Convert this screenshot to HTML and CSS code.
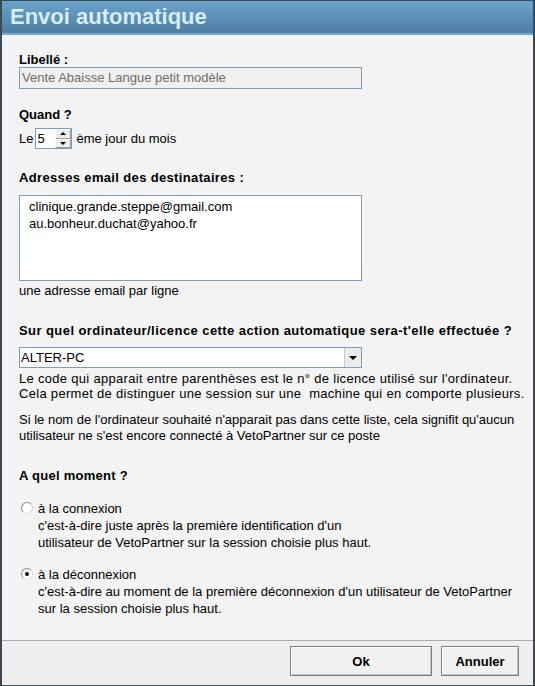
FILE: index.html
```html
<!DOCTYPE html>
<html lang="fr">
<head>
<meta charset="utf-8">
<title>Envoi automatique</title>
<link rel="stylesheet" href="styles.css">
</head>
<body>
<div class="window">
  <div class="titlebar"><h1 class="title">Envoi automatique</h1></div>
  <div class="content">
    <div class="label lbl-libelle">Libellé :</div>
    <div class="textbox disabled">Vente Abaisse Langue petit modèle</div>

    <div class="label lbl-quand">Quand ?</div>
    <div class="spin-row">
      <span>Le</span>
      <span class="spinbox">
        <span class="spin-value">5</span>
        <span class="spin-btns">
          <span class="spin-btn"><span class="tri-up"></span></span>
          <span class="spin-btn"><span class="tri-down"></span></span>
        </span>
      </span>
      <span>ème jour du mois</span>
    </div>

    <div class="label lbl-adresses">Adresses email des destinataires :</div>
    <div class="memo">
      <div>clinique.grande.steppe@gmail.com</div>
      <div>au.bonheur.duchat@yahoo.fr</div>
    </div>
    <div class="hint">une adresse email par ligne</div>

    <div class="label lbl-ordi">Sur quel ordinateur/licence cette action automatique sera-t'elle effectuée ?</div>
    <div class="combo">
      <span class="combo-value">ALTER-PC</span>
      <span class="combo-btn"><span class="tri-down big"></span></span>
    </div>
    <div class="desc desc1">Le code qui apparait entre parenthèses est le n° de licence utilisé sur l'ordinateur.<br>Cela permet de distinguer une session sur une&nbsp; machine qui en comporte plusieurs.</div>
    <div class="desc desc2">Si le nom de l'ordinateur souhaité n'apparait pas dans cette liste, cela signifit qu'aucun<br>utilisateur ne s'est encore connecté à VetoPartner sur ce poste</div>

    <div class="label lbl-moment">A quel moment ?</div>
    <div class="radio-group rg1">
      <span class="radio"></span>
      <div class="radio-text">à la connexion<br>c'est-à-dire juste après la première identification d'un<br>utilisateur de VetoPartner sur la session choisie plus haut.</div>
    </div>
    <div class="radio-group rg2">
      <span class="radio checked"></span>
      <div class="radio-text">à la déconnexion<br>c'est-à-dire au moment de la première déconnexion d'un utilisateur de VetoPartner<br>sur la session choisie plus haut.</div>
    </div>
  </div>
  <div class="footer">
    <button class="btn btn-ok">Ok</button>
    <button class="btn btn-cancel">Annuler</button>
  </div>
</div>
</body>
</html>
```
FILE: styles.css
```css
* { box-sizing: border-box; }
html, body { margin: 0; padding: 0; background: #3d4d55; }
body { font-family: "Liberation Sans", Arial, sans-serif; font-size: 13px; color: #000; }

.window {
  width: 535px;
  height: 686px;
  border-left: 2px solid #3b4a52;
  border-right: 2px solid #3b4a52;
  border-top: 1px solid #3b4a52;
  border-bottom: 1px solid #3b4a52;
  display: flex;
  flex-direction: column;
  background: #f3f3f3;
}

.titlebar {
  height: 34px;
  flex: none;
  background: linear-gradient(#6aa3cb, #4e7ea2);
  border-bottom: 2px solid #6ea9d6;
  padding-left: 8px;
}
.title {
  margin: 0;
  font-family: "Liberation Sans", Arial, sans-serif;
  font-weight: bold;
  font-size: 22px;
  line-height: 32px;
  color: #d9ecfa;
}

.content {
  height: 605px;
  flex: none;
  padding: 18px 0 0 17px;
  display: flex;
  flex-direction: column;
  align-items: flex-start;
}

.label { font-weight: bold; line-height: 14px; }
.lbl-quand { margin-top: 19px; }
.lbl-adresses { margin-top: 22px; letter-spacing: 0.35px; }
.lbl-ordi { margin-top: 26px; letter-spacing: 0.43px; }
.lbl-moment { margin-top: 25px; letter-spacing: 0.27px; }

.textbox {
  width: 343px;
  height: 22px;
  border: 1px solid #7f9db9;
  padding-left: 2px;
  line-height: 20px;
}
.textbox.disabled { background: #f0f0f0; color: #6d6d6d; }

.spin-row {
  margin-top: 6px;
  height: 21px;
  display: flex;
  align-items: center;
}
.spinbox {
  margin-left: 2px;
  margin-right: 4px;
  width: 37px;
  height: 21px;
  border: 1px solid #7f9db9;
  background: #fff;
  display: flex;
  justify-content: space-between;
}
.spin-value { padding-left: 1px; line-height: 19px; }
.spin-btns { width: 16px; display: flex; flex-direction: column; }
.spin-btn {
  flex: 1;
  background: #ececec;
  border: 1px solid #b8b8b8;
  border-color: #ffffff #9a9a9a #9a9a9a #ffffff;
  display: flex;
  align-items: center;
  justify-content: center;
}
.tri-up, .tri-down { width: 0; height: 0; border-left: 3px solid transparent; border-right: 3px solid transparent; }
.tri-up { border-bottom: 3px solid #000; }
.tri-down { border-top: 3px solid #000; }
.tri-down.big { border-left-width: 4px; border-right-width: 4px; border-top-width: 4px; }

.memo {
  margin-top: 10px;
  width: 343px;
  height: 86px;
  border: 1px solid #7f9db9;
  background: #fff;
  padding: 2px 0 0 9px;
  line-height: 17px;
}
.hint { margin-top: 3px; line-height: 14px; }

.combo {
  margin-top: 9px;
  width: 343px;
  height: 21px;
  border: 1px solid #7f9db9;
  background: #fff;
  display: flex;
  justify-content: space-between;
}
.combo-value { padding-left: 1px; line-height: 19px; }
.combo-btn {
  width: 17px;
  background: #ebebeb;
  border-left: 1px solid #c8c8c8;
  display: flex;
  align-items: center;
  justify-content: center;
}

.desc1 { margin-top: 3px; line-height: 15px; letter-spacing: 0.3px; }
.desc2 { margin-top: 11px; line-height: 16px; }

.radio-group { display: flex; align-items: flex-start; line-height: 17px; }
.rg1 { margin-top: 17px; }
.rg2 { margin-top: 15px; }
.radio {
  margin: 2px 0 0 2px;
  width: 12px;
  height: 12px;
  border-radius: 50%;
  border: 1px solid #a3a3a3;
  border-color: #8c8c8c #d6d6d6 #e2e2e2 #8c8c8c;
  background: #fff;
  display: flex;
  align-items: center;
  justify-content: center;
  flex: none;
}
.radio.checked::after {
  content: "";
  width: 4px;
  height: 4px;
  border-radius: 50%;
  background: #000;
}
.radio-text { margin-left: 5px; }

.footer {
  flex: 1;
  border-top: 1px solid #aaaaaa;
  background: #eeeeee;
  display: flex;
  justify-content: flex-end;
  align-items: flex-start;
  gap: 9px;
  padding: 5px 14px 0 0;
}
.btn {
  height: 30px;
  font-family: "Liberation Sans", Arial, sans-serif;
  font-weight: bold;
  font-size: 13px;
  color: #000;
  background: #f0f0f0;
  border: 1px solid #7c7c7c;
  box-shadow: inset 1px 1px 0 #ffffff, inset -1px -1px 0 #c4c4c4;
  padding: 0;
}
.btn-ok { width: 142px; }
.btn-cancel { width: 78px; }
```
